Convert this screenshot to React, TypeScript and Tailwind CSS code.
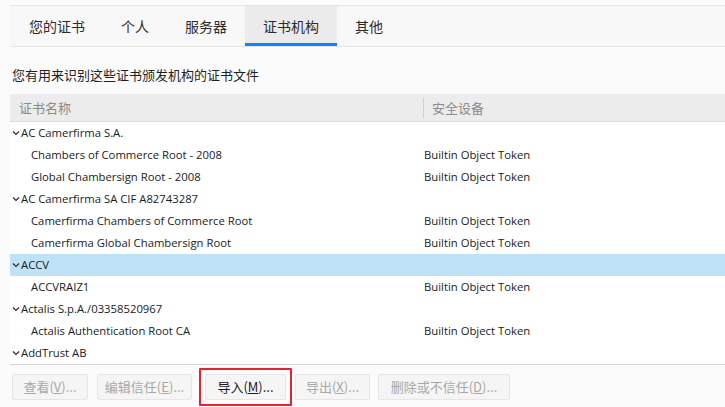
const tabs = ["您的证书", "个人", "服务器", "证书机构", "其他"];

type Row = { name: string; device?: string; group?: boolean; selected?: boolean };

const rows: Row[] = [
  { name: "AC Camerfirma S.A.", group: true },
  { name: "Chambers of Commerce Root - 2008", device: "Builtin Object Token" },
  { name: "Global Chambersign Root - 2008", device: "Builtin Object Token" },
  { name: "AC Camerfirma SA CIF A82743287", group: true },
  { name: "Camerfirma Chambers of Commerce Root", device: "Builtin Object Token" },
  { name: "Camerfirma Global Chambersign Root", device: "Builtin Object Token" },
  { name: "ACCV", group: true, selected: true },
  { name: "ACCVRAIZ1", device: "Builtin Object Token" },
  { name: "Actalis S.p.A./03358520967", group: true },
  { name: "Actalis Authentication Root CA", device: "Builtin Object Token" },
  { name: "AddTrust AB", group: true },
];

const cjk = { fontFamily: '"Noto Sans CJK SC", sans-serif' };

function Chevron() {
  return (
    <svg width="8" height="6" viewBox="0 0 8 6" className="mr-[1px] shrink-0">
      <path d="M1 1.5 L4 4.5 L7 1.5" fill="none" stroke="#2b2b2b" strokeWidth="1.2" />
    </svg>
  );
}

function Btn({ label, k, w, active }: { label: string; k: string; w: string; active?: boolean }) {
  return (
    <button
      type="button"
      className={`flex h-[26px] items-center justify-center rounded-[2px] border border-[#e6e6e6] bg-[#f5f5f5] text-[13px] ${w} ${
        active ? "text-[#1b1b1b]" : "text-[#a8a8a8]"
      }`}
      style={cjk}
    >
      {label}(<span className="underline">{k}</span>)...
    </button>
  );
}

export default function App() {
  return (
    <div
      className="h-[407px] w-[725px] overflow-hidden bg-[#fbfbfb] text-[#1b1b1b]"
      style={{ fontFamily: '"Open Sans", "Noto Sans CJK SC", sans-serif' }}
    >
      <div className="h-[5px] bg-[#fcfcfc]" />
      <div className="ml-[10px] flex h-[42px] border-y border-[#e6e6e6] bg-[#f8f8f8] pl-[1px]">
        {tabs.map((t) => {
          const on = t === "证书机构";
          return (
            <div
              key={t}
              className={`flex h-full items-center px-[18px] text-[14px] ${
                on ? "border-b-[3px] border-[#0a84ff] bg-[#ebebeb] pt-[3px]" : ""
              }`}
              style={cjk}
            >
              <span className="text-[#2b2b2b]">{t}</span>
            </div>
          );
        })}
      </div>
      <div className="mt-[15px] pl-[12px] text-[13px] leading-[26px] text-[#1f1f1f]" style={cjk}>
        您有用来识别这些证书颁发机构的证书文件
      </div>
      <div className="ml-[10px] mt-[6px]">
        <div
          className="flex h-[28px] items-center border-b border-[#dcdcdc] bg-[#ececec] text-[13px] text-[#8a8a8a]"
          style={cjk}
        >
          <div className="w-[413px] pl-[9px]">证书名称</div>
          <div className="h-[20px] w-px bg-[#cfcfcf]" />
          <div className="pl-[8px]">安全设备</div>
        </div>
        <div className="border-b border-[#d6d6d6] bg-white">
          {rows.map((r, i) => (
            <div
              key={i}
              className={`flex h-[22px] items-center text-[11.3px] ${r.selected ? "bg-[#bfe2f6]" : ""}`}
            >
              <div className={`flex w-[414px] items-center ${r.group ? "pl-[2px]" : "pl-[21px]"}`}>
                {r.group && <Chevron />}
                <span>{r.name}</span>
              </div>
              {r.device && <div>{r.device}</div>}
            </div>
          ))}
        </div>
      </div>
      <div className="flex items-center pl-[12px] pt-[3px]">
        <Btn label="查看" k="V" w="w-[76px]" />
        <div className="w-[9px]" />
        <Btn label="编辑信任" k="E" w="w-[95px]" />
        <div className="ml-[7px] rounded-[1px] border-2 border-[#e0252f] p-[4px]">
          <Btn label="导入" k="M" w="w-[81px]" active />
        </div>
        <div className="w-[3px]" />
        <Btn label="导出" k="X" w="w-[75px]" />
        <div className="w-[8px]" />
        <Btn label="删除或不信任" k="D" w="w-[132px]" />
      </div>
    </div>
  );
}
